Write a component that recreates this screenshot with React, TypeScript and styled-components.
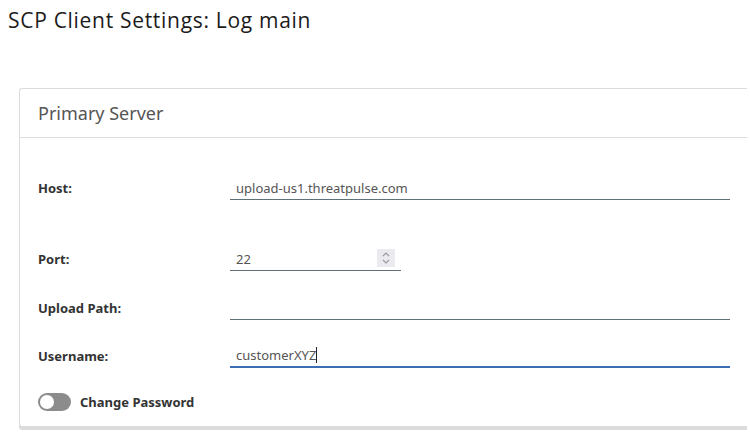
import React from "react";
import styled, { createGlobalStyle } from "styled-components";

const Global = createGlobalStyle`
  html, body { margin: 0; padding: 0; background: #fff; }
  body { font-family: "Noto Sans", "Open Sans", sans-serif; color: #333; }
`;

const Page = styled.div`
  width: 750px;
  height: 436px;
  overflow: hidden;
`;

const Title = styled.h1`
  margin: 0;
  padding: 6px 0 0 8px;
  height: 88px;
  box-sizing: border-box;
  font-family: "Open Sans", sans-serif;
  font-weight: 400;
  font-size: 21px;
  line-height: 28px;
  letter-spacing: 0.7px;
  color: #1b1b1b;
`;

const Card = styled.section`
  margin-left: 19px;
  width: 727px;
  border: 1px solid #dcdcdc;
  border-right: none;
  border-radius: 3px 0 0 3px;
  box-shadow: 0 3px 0 #dcdcdc;
  background: #fff;
`;

const CardHeader = styled.div`
  height: 48px;
  display: flex;
  align-items: center;
  padding-left: 18px;
  border-bottom: 1px solid #dcdcdc;
  font-size: 18px;
  color: #555;
`;

const CardBody = styled.div`
  padding: 38px 17px 15px 18px;
  display: flex;
  flex-direction: column;
`;

const Row = styled.div<{ $mt: number }>`
  display: grid;
  grid-template-columns: 192px 1fr;
  align-items: center;
  margin-top: ${(p) => p.$mt}px;
`;

const Label = styled.label`
  font-size: 13px;
  font-weight: 700;
  color: #333;
`;

const InputWrap = styled.div<{ $width?: number; $focus?: boolean }>`
  position: relative;
  height: 24px;
  width: ${(p) => (p.$width ? `${p.$width}px` : "100%")};
  box-sizing: border-box;
  border-bottom: ${(p) => (p.$focus ? "2px solid #3a6db4" : "1px solid #5e7178")};
  display: flex;
  align-items: center;
`;

const Input = styled.input`
  border: none;
  outline: none;
  background: transparent;
  padding: 0 6px;
  width: 100%;
  font-family: "Noto Sans", sans-serif;
  font-size: 13px;
  color: #555;
  height: 22px;
`;

const Caret = styled.span`
  display: inline-block;
  width: 1px;
  height: 16px;
  background: #222;
`;

const FakeText = styled.div`
  padding: 0 6px;
  font-size: 13px;
  color: #555;
  display: flex;
  align-items: center;
`;

const Spinner = styled.div`
  position: absolute;
  right: 6px;
  top: 2px;
  width: 18px;
  height: 18px;
  background: #ebebef;
  display: flex;
  align-items: center;
  justify-content: center;
`;

const ToggleRow = styled.div`
  display: flex;
  align-items: center;
  gap: 9px;
  margin-top: 25px;
`;

const Track = styled.span`
  width: 33px;
  height: 18px;
  border-radius: 9px;
  background: #8c8c8c;
  display: flex;
  align-items: center;
  padding: 0 2px;
  box-sizing: border-box;
`;

const Knob = styled.span`
  width: 14px;
  height: 14px;
  border-radius: 50%;
  background: #fff;
`;

const ToggleLabel = styled.span`
  font-size: 13px;
  font-weight: 700;
  color: #333;
`;

export default function App() {
  return (
    <Page>
      <Global />
      <Title>SCP Client Settings: Log main</Title>
      <Card>
        <CardHeader>Primary Server</CardHeader>
        <CardBody>
          <Row $mt={0}>
            <Label>Host:</Label>
            <InputWrap>
              <Input defaultValue="upload-us1.threatpulse.com" />
            </InputWrap>
          </Row>
          <Row $mt={47}>
            <Label>Port:</Label>
            <InputWrap $width={171}>
              <Input defaultValue="22" />
              <Spinner>
                <svg width="10" height="14" viewBox="0 0 10 14" fill="none" stroke="#9a9aa6" strokeWidth="1.2">
                  <path d="M2 5 L5 2 L8 5" />
                  <path d="M2 9 L5 12 L8 9" />
                </svg>
              </Spinner>
            </InputWrap>
          </Row>
          <Row $mt={25}>
            <Label>Upload Path:</Label>
            <InputWrap>
              <Input defaultValue="" />
            </InputWrap>
          </Row>
          <Row $mt={24}>
            <Label>Username:</Label>
            <InputWrap $focus>
              <FakeText>
                customerXYZ
                <Caret />
              </FakeText>
            </InputWrap>
          </Row>
          <ToggleRow>
            <Track>
              <Knob />
            </Track>
            <ToggleLabel>Change Password</ToggleLabel>
          </ToggleRow>
        </CardBody>
      </Card>
    </Page>
  );
}
